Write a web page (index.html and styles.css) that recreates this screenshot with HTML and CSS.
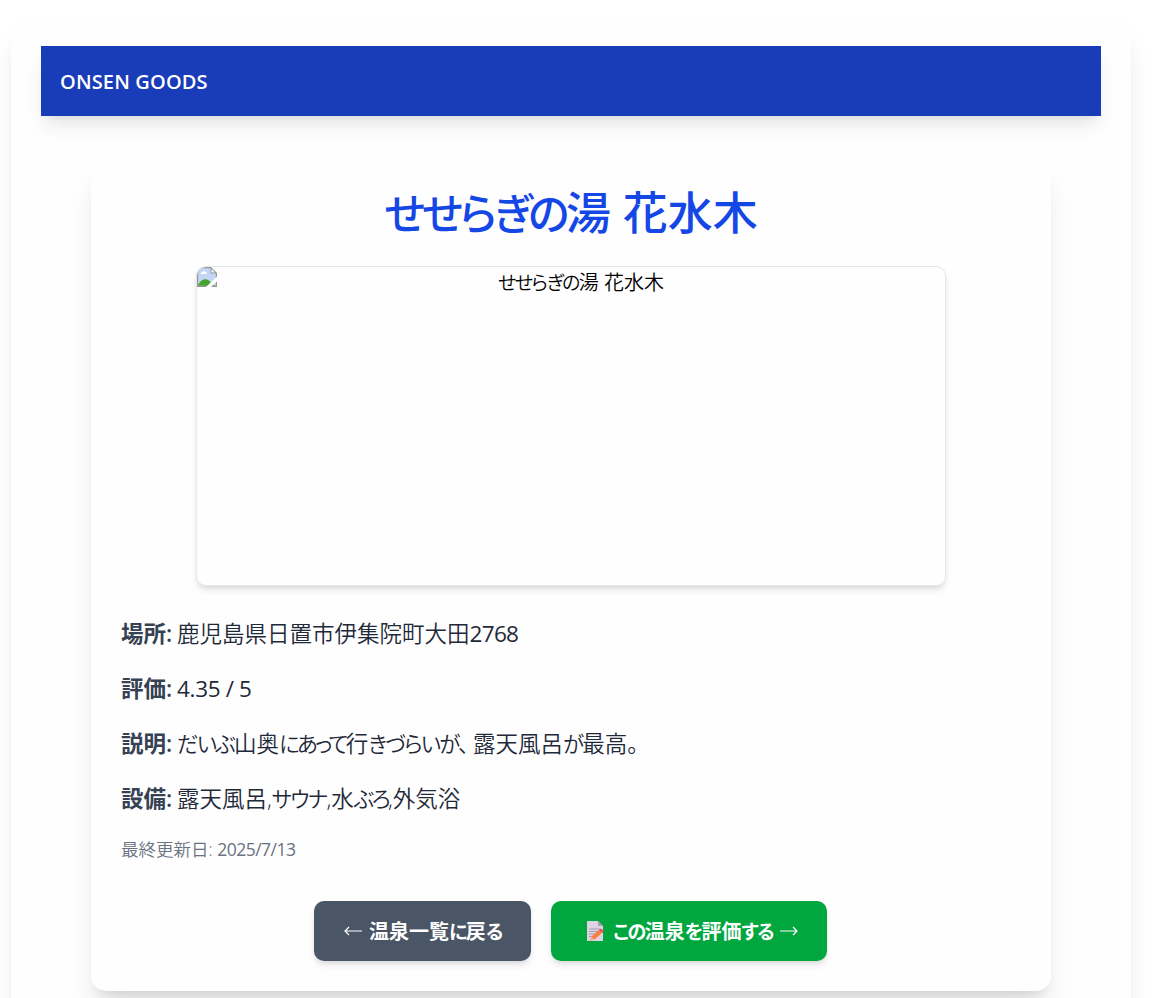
FILE: index.html
```html
<!DOCTYPE html>
<html lang="ja">
<head>
    <meta charset="UTF-8">
    <title>せせらぎの湯 花水木</title>
    <meta name="viewport" content="width=device-width, initial-scale=1.0">
    <link rel="stylesheet" href="styles.css">
</head>
<body>

<main class="container">
    <!-- Header -->
    <header class="site-header">
        <a class="brand" href="#">ONSEN GOODS</a>
    </header>

    <!-- Onsen detail -->
    <article class="card">
        <h1><span class="kana">せせらぎの</span>湯 花水木</h1>

        <div class="photo">
            <svg class="photo-icon" width="20" height="20" viewBox="0 0 20 20">
                <path d="M0 0h14l6 6v14H0z" fill="#969696"/>
                <path d="M1.2 1.2h12.300v5.300h5.300v12.300H1.200z" fill="#c3d6f5"/>
                <path d="M14.500 2v3.500H18z" fill="#fff"/>
                <path d="M3.500 7q0-1.800 2-1.800Q6.500 3 8 5q2 .2 2 2z" fill="#fff"/>
                <path d="M1.200 18.800c1-4 4-6.500 7-6.500 2.500 0 4.500 1.500 6 3.500l4 3z" fill="#46a52c"/>
                <path d="M20 9.500L9 20h5l6-5.500z" fill="#fff"/>
            </svg>
            <span class="kana">せせらぎの</span>湯 花水木
        </div>

        <div class="details">
            <p><strong>場所:</strong> 鹿児島県日置市伊集院町大田<span class="num">2768</span></p>
            <p><strong>評価:</strong> <span class="num rating">4.35 / 5</span></p>
            <p><strong>説明:</strong> <span class="kana">だいぶ</span>山奥<span class="kana kana-tight">にあって</span>行<span class="kana">きづらいが、</span> 露天風呂<span class="kana">が</span>最高。</p>
            <p><strong>設備:</strong> 露天風呂,<span class="kana">サウナ</span>,水<span class="kana kana-tight">ぶろ</span>,外気浴</p>
            <p class="updated">最終更新日: <span class="num">2025/7/13</span></p>
        </div>

        <div class="actions">
            <a class="btn btn-back" href="#">
                <svg class="arrow" width="20" height="20" viewBox="0 0 20 20"><path d="M19 10H2M6 6L2 10l4 4"/></svg>
                <span class="label">温泉一覧<span class="kana">に</span>戻<span class="kana">る</span></span>
            </a>
            <a class="btn btn-review" href="#">
                <svg class="memo" width="20" height="22" viewBox="0 0 20 22">
                    <path d="M2 1h11l5 5v15H2z" fill="#ddd3e3"/>
                    <path d="M13 1v5h5z" fill="#a99bb3"/>
                    <path d="M4 9h11M4 11.500h10M4 14h6M4 16.500h3" stroke="#a99db3" fill="none"/>
                    <path d="M6.500 16.500L14 10l3 3-7.500 6.500-4.500 1z" fill="#ff7d3c"/>
                    <path d="M14 10l2-1.500 3 3L17 13z" fill="#e8484d"/>
                    <path d="M6.500 16.500l3 3-4.500 1z" fill="#e9b590"/>
                </svg>
                <span class="label"><span class="kana">この</span>温泉<span class="kana">を</span>評価<span class="kana">する</span></span>
                <svg class="arrow" width="20" height="20" viewBox="0 0 20 20"><path d="M1 10h17M14 6l4 4-4 4"/></svg>
            </a>
        </div>
    </article>
</main>

</body>
</html>
```

FILE: styles.css
```css
* {
    box-sizing: border-box;
}

body {
    height: 100vh;
    margin: 0;
    padding: 16px 0 0 11px;
    background: #fff;
    color: #000;
    font-family: "Open Sans", "Noto Sans CJK JP", sans-serif;
    font-size: 20px;
    line-height: 30px;
    overflow: hidden;
}

h1,
p {
    margin: 0;
}

a {
    color: #fff;
    text-decoration: none;
}

.kana {
    font-size: 0.95em;
    font-feature-settings: "palt";
    letter-spacing: -0.08em;
    line-height: 1;
}

.kana-tight {
    letter-spacing: -0.12em;
}

.num {
    font-weight: 400;
    letter-spacing: -0.03em;
}

.rating {
    letter-spacing: -0.015em;
}

.container {
    width: 1120px;
    height: 1100px;
    padding: 30px;
    background: #fefefe;
    border-radius: 15px;
    box-shadow: 0 25px 31px -6px rgba(0,0,0,0.1), 0 10px 12px -7px rgba(0,0,0,0.1);
}

.site-header {
    display: flex;
    align-items: center;
    height: 70px;
    margin-bottom: 40px;
    padding: 2px 19px 0;
    background: #193cb8;
    box-shadow: 0 12px 19px -4px rgba(0,0,0,0.1), 0 5px 7px -5px rgba(0,0,0,0.1);
}

.brand {
    font-size: 20px;
    font-weight: 600;
    letter-spacing: 0.15px;
}

.card {
    width: 960px;
    margin: 0 auto;
    padding: 30px;
    background: #fefefe;
    border-radius: 15px;
    box-shadow: 0 25px 31px -6px rgba(0,0,0,0.1), 0 10px 12px -7px rgba(0,0,0,0.1);
}

h1 {
    height: 50px;
    margin-bottom: 30px;
    padding-top: 2px;
    color: #1447e6;
    font-size: 45px;
    font-weight: 500;
    line-height: 50px;
    text-align: center;
}

.photo {
    position: relative;
    width: 750px;
    height: 320px;
    margin: 0 auto 30px;
    padding: 1px 0 0 20px;
    border: 1px solid #e5e7eb;
    border-radius: 10px;
    box-shadow: 0 5px 7px -1px rgba(0,0,0,0.1), 0 2px 5px -2px rgba(0,0,0,0.1);
    font-weight: 350;
    text-align: center;
    overflow: hidden;
}

.photo-icon {
    position: absolute;
    top: 0;
    left: 0;
}

.details {
    display: flex;
    flex-direction: column;
    gap: 20px;
    color: #1e2939;
    font-size: 22.5px;
    font-weight: 350;
    line-height: 35px;
}

.details strong {
    margin-right: -1px;
    color: #364153;
    font-weight: 600;
}

.details .updated {
    padding-top: 1px;
    color: #6a7282;
    font-size: 17.5px;
    line-height: 25px;
}

.actions {
    display: flex;
    justify-content: center;
    gap: 20px;
    margin-top: 39px;
    padding-right: 1px;
}

.btn {
    display: flex;
    align-items: center;
    height: 60px;
    border-radius: 10px;
    font-weight: 700;
    white-space: nowrap;
    box-shadow: 0 5px 7px -1px rgba(0,0,0,0.1), 0 2px 5px -2px rgba(0,0,0,0.1);
}

.btn .label {
    padding-top: 2px;
}

.btn-back {
    gap: 6px;
    width: 217px;
    padding-left: 29px;
    background: #4a5565;
}

.btn-review {
    gap: 6px;
    width: 276px;
    padding-left: 34px;
    background: #00a63e;
}

.memo {
    margin-right: 2px;
}

.arrow {
    fill: none;
    stroke: #fff;
    stroke-width: 1.2;
}
```
